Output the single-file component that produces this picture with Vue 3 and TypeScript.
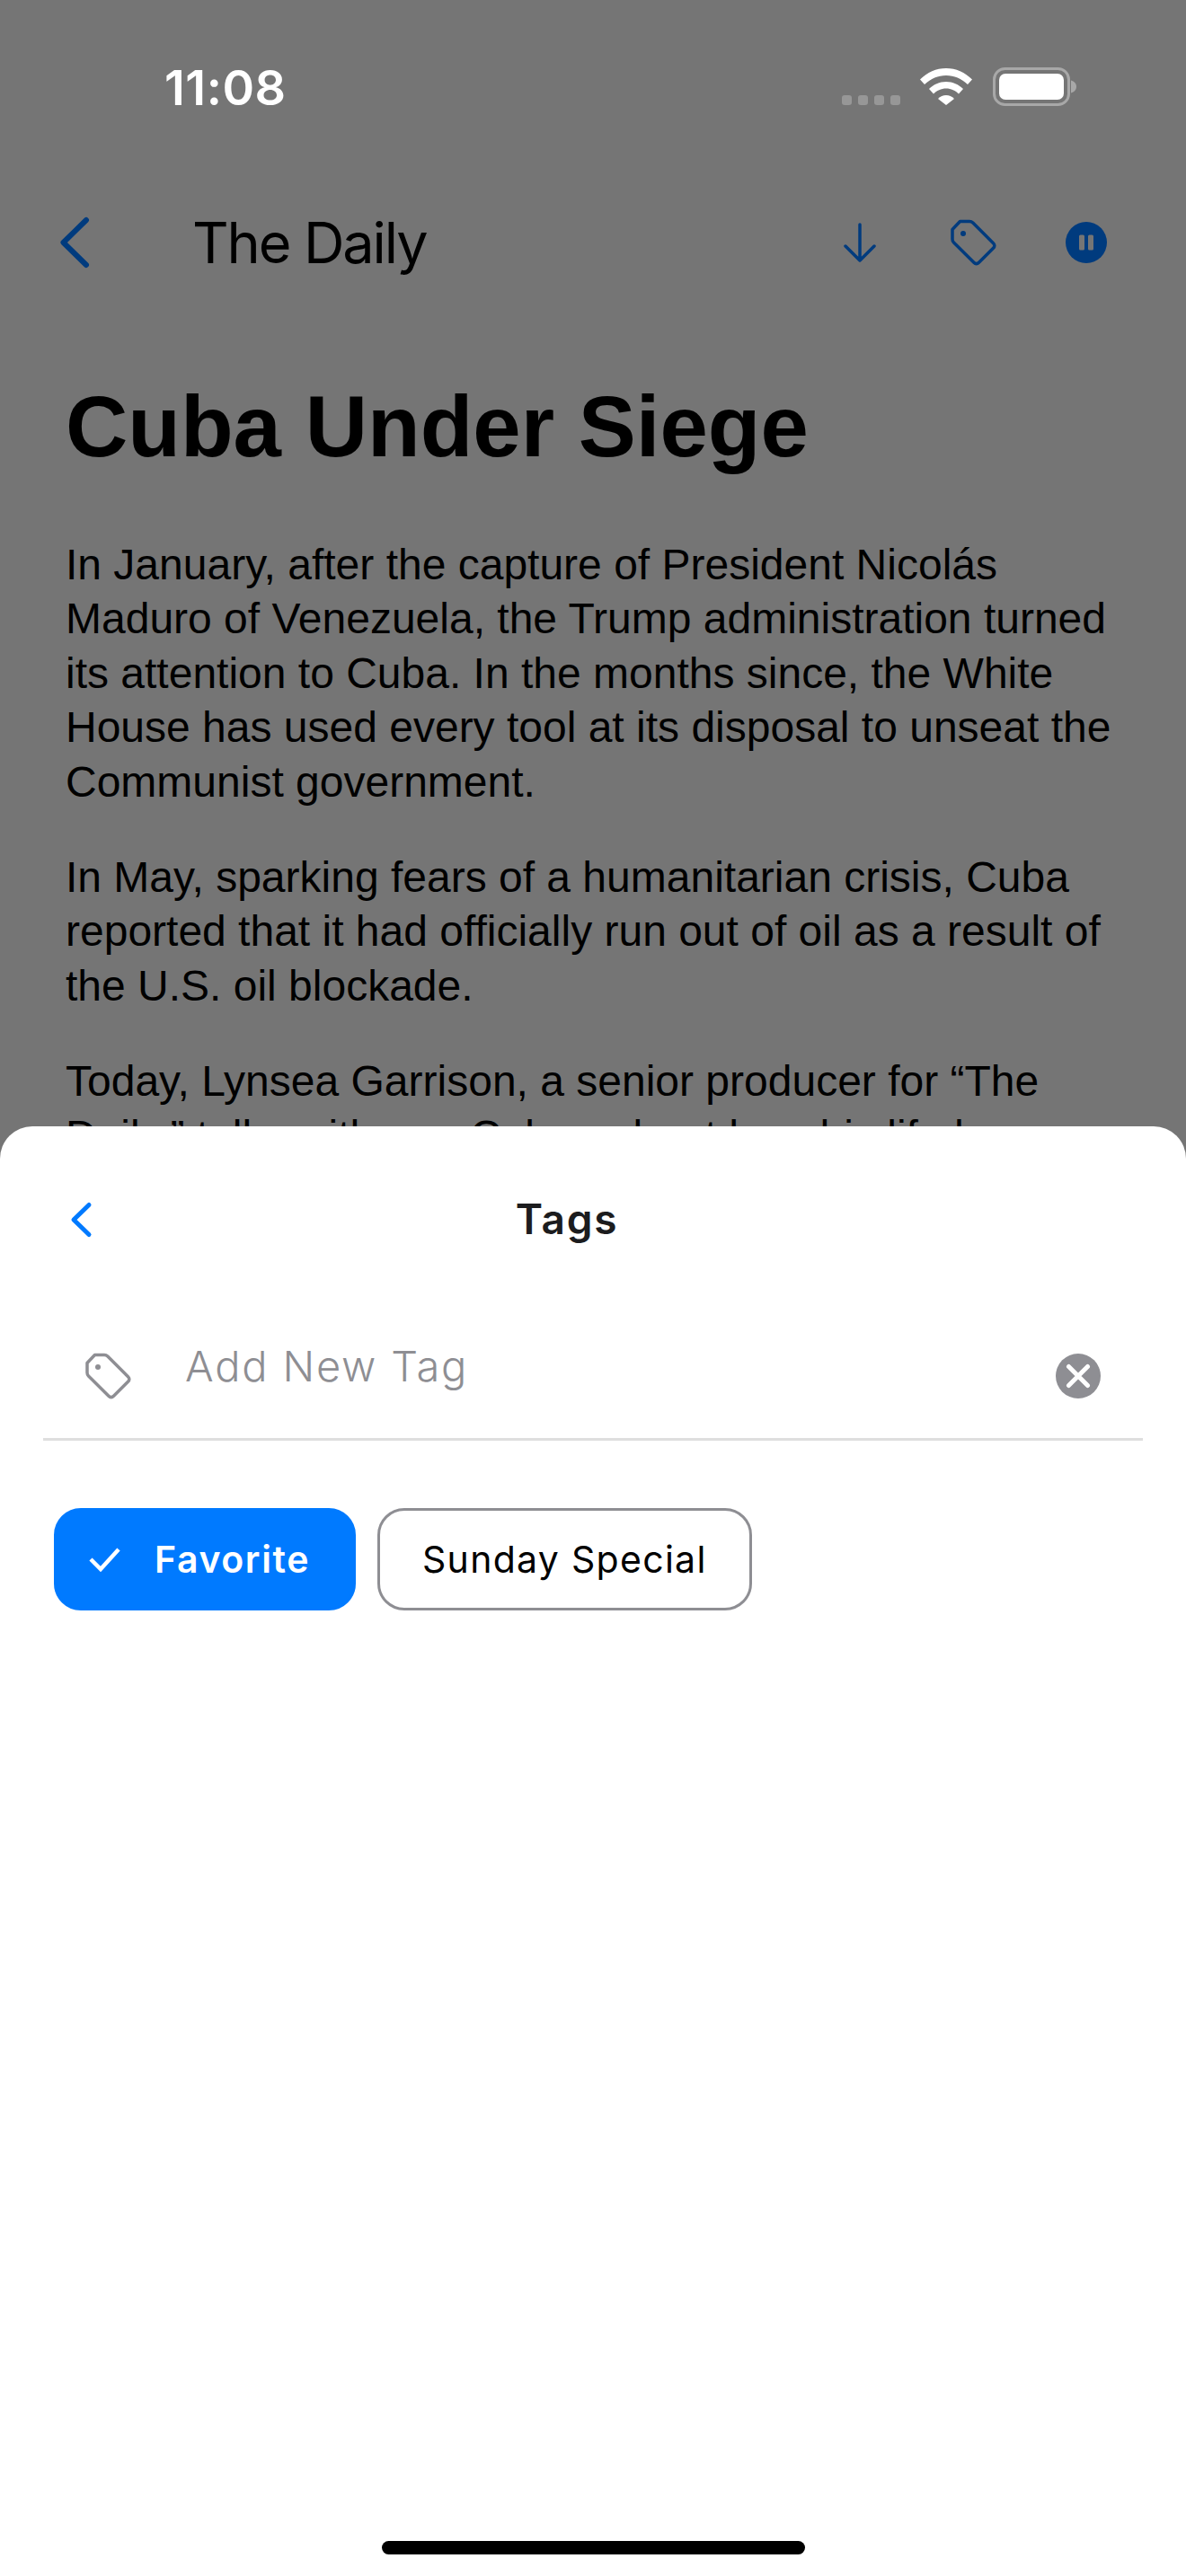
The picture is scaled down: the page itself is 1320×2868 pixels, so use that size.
<script setup lang="ts">
// article copy, one entry per rendered line
const paragraphs: string[][] = [
  [
    'In January, after the capture of President Nicolás',
    'Maduro of Venezuela, the Trump administration turned',
    'its attention to Cuba. In the months since, the White',
    'House has used every tool at its disposal to unseat the',
    'Communist government.',
  ],
  [
    'In May, sparking fears of a humanitarian crisis, Cuba',
    'reported that it had officially run out of oil as a result of',
    'the U.S. oil blockade.',
  ],
  [
    'Today, Lynsea Garrison, a senior producer for “The',
    'Daily,” talks with one Cuban about how his life has',
  ],
]
</script>

<template>
  <div class="screen">
    <div class="status">
      <span class="clock">11:08</span>
      <div class="status-icons">
        <div class="signal"><i></i><i></i><i></i><i></i></div>
        <svg class="wifi" width="58" height="42" viewBox="0 0 58 42">
          <path d="M0 13.500C8 5.500 18 1 29 1s21 4.500 29 12.500l-5 5.500C46 12.500 38 9 29 9s-17 3.500-24 10z" fill="#fff" />
          <path d="M10 24c5-5 11.500-8 19-8s14 3 19 8l-5 5.500c-3.500-3.500-8.500-6-14-6s-10.500 2.500-14 6z" fill="#fff" />
          <path d="M20 35c2.500-2.500 5.500-4 9-4s6.500 1.500 9 4L29 42z" fill="#fff" />
        </svg>
        <svg class="battery" width="94" height="44" viewBox="0 0 94 44">
          <rect x="2.500" y="1.500" width="83" height="40" rx="12" fill="none" stroke="#a8a8a8" stroke-width="3" />
          <rect x="8" y="7" width="72" height="29" rx="7" fill="#fff" />
          <path d="M88 14.500c3.500.8 6 3.500 6 7s-2.500 6.200-6 7z" fill="#a8a8a8" />
        </svg>
      </div>
    </div>

    <header class="nav">
      <svg class="nav-back" width="36" height="58" viewBox="0 0 36 58">
        <path d="M30 4 4.500 29 30 54" fill="none" stroke="#003b7e" stroke-width="6" stroke-linecap="round" stroke-linejoin="round" />
      </svg>
      <span class="nav-title">The Daily</span>
      <div class="nav-actions">
        <svg width="36" height="44" viewBox="0 0 36 44">
          <path d="M18 2v40M2 26l16 16 16-16" fill="none" stroke="#003b7e" stroke-width="3.500" stroke-linecap="round" stroke-linejoin="round" />
        </svg>
        <svg class="nav-tag" width="52" height="52" viewBox="0 0 52 52">
          <path d="M3 11.500 11.500 2.500h10.500c1.500 0 2.800.5 3.800 1.500l22.700 22.700c1.800 1.800 1.800 3.800 0 5.600L32.500 48.300c-1.800 1.800-3.800 1.800-5.600 0L4.500 26C3.500 25 3 23.700 3 22.200z" fill="none" stroke="#003b7e" stroke-width="3.500" stroke-linejoin="round" />
          <circle cx="15" cy="16" r="3" fill="#003b7e" />
        </svg>
        <svg width="46" height="46" viewBox="0 0 46 46">
          <circle cx="23" cy="23" r="23" fill="#003b7e" />
          <rect x="15" y="14.500" width="6" height="17" rx="1.500" fill="#757575" />
          <rect x="25" y="14.500" width="6" height="17" rx="1.500" fill="#757575" />
        </svg>
      </div>
    </header>

    <article class="article">
      <h1>Cuba Under Siege</h1>
      <p v-for="(lines, i) in paragraphs" :key="i">
        <span v-for="line in lines" :key="line" class="line">{{ line }}</span>
      </p>
    </article>

    <section class="sheet">
      <div class="sheet-head">
        <svg class="sheet-back" width="26" height="44" viewBox="0 0 26 44">
          <path d="M21 5.500 4 22l17 16.500" fill="none" stroke="#007aff" stroke-width="5" stroke-linecap="round" stroke-linejoin="round" />
        </svg>
        <h2>Tags</h2>
      </div>

      <div class="tag-input">
        <svg width="52" height="52" viewBox="0 0 52 52">
          <path d="M3 11.500 11.500 2.500h10.500c1.500 0 2.800.5 3.800 1.500l22.700 22.700c1.800 1.800 1.800 3.800 0 5.600L32.500 48.300c-1.800 1.800-3.800 1.800-5.600 0L4.500 26C3.500 25 3 23.700 3 22.200z" fill="none" stroke="#8e8e93" stroke-width="3.500" stroke-linejoin="round" />
          <circle cx="15" cy="16" r="3" fill="#8e8e93" />
        </svg>
        <span class="placeholder">Add New Tag</span>
        <svg class="clear" width="50" height="50" viewBox="0 0 50 50">
          <circle cx="25" cy="25" r="25" fill="#8e8e93" />
          <path d="M14.500 14.500l21 21M35.500 14.500l-21 21" stroke="#fff" stroke-width="5" stroke-linecap="round" />
        </svg>
      </div>

      <div class="tags">
        <button class="tag tag-on">
          <svg width="36" height="28" viewBox="0 0 36 28">
            <path d="M2 14l11 11L33 3" fill="none" stroke="#fff" stroke-width="4.500" />
          </svg>
          Favorite
        </button>
        <button class="tag">Sunday Special</button>
      </div>

      <div class="home-bar"></div>
    </section>
  </div>
</template>

<style scoped>
.screen {
  position: relative;
  width: 1320px;
  height: 2868px;
  overflow: hidden;
  background: #757575;
  font-family: Inter, sans-serif;
}

.status {
  display: flex;
  justify-content: space-between;
  align-items: center;
  height: 44px;
  padding: 75px 0 0 183px;
  margin-right: 122px;
}

.clock {
  color: #fff;
  font-size: 54px;
  font-weight: 600;
  letter-spacing: 0.500px;
}

.status-icons {
  display: flex;
  align-items: flex-end;
  gap: 22px;
}

.signal {
  display: flex;
  gap: 7px;
  margin-bottom: 2px;
}

.signal i {
  width: 11px;
  height: 11px;
  border-radius: 3px;
  background: #979797;
}

.wifi {
  margin-bottom: 2px;
}

.nav {
  display: flex;
  align-items: center;
  height: 70px;
  margin-top: 116px;
  padding: 0 88px 0 66px;
}

.nav-title {
  margin-left: 112px;
  font-size: 63px;
  letter-spacing: -2.100px;
  color: #000;
}

.nav-actions {
  display: flex;
  align-items: center;
  margin-left: auto;
}

.nav-tag {
  margin: 0 77px 0 82px;
}

.article {
  padding: 0 40px 0 73px;
  font-family: "Liberation Sans", Arial, sans-serif;
  color: #000;
}

h1 {
  margin: 115px 0 69px;
  font-size: 96px;
  line-height: 110px;
  font-weight: 700;
}

.article p {
  margin: 0 0 46px;
  font-size: 48px;
  line-height: 60.400px;
  white-space: nowrap;
}

.line {
  display: block;
}

.sheet {
  position: absolute;
  left: 0;
  right: 0;
  top: 1254px;
  bottom: 0;
  display: flex;
  flex-direction: column;
  background: #fff;
  border-radius: 36px 36px 0 0;
}

.sheet-head {
  position: relative;
  display: flex;
  justify-content: center;
  align-items: center;
  height: 44px;
  margin-top: 82px;
}

.sheet-back {
  position: absolute;
  left: 78px;
  top: 0;
}

h2 {
  margin: -2px 0 0 -58px;
  font-size: 46px;
  font-weight: 600;
  letter-spacing: 1.800px;
  color: #1c1c1e;
}

.tag-input {
  display: flex;
  align-items: center;
  height: 138px;
  margin: 83px 48px 0;
  padding: 0 47px 0 46px;
  border-bottom: 3px solid #dedede;
}

.placeholder {
  margin: 0 0 23px 60px;
  font-size: 47px;
  font-weight: 300;
  letter-spacing: 1.800px;
  color: #8e8e93;
}

.clear {
  margin-left: auto;
}

.tags {
  display: flex;
  gap: 24px;
  margin: 75px 0 0 60px;
}

.tag {
  display: flex;
  align-items: center;
  gap: 37px;
  height: 114px;
  padding: 0 47px;
  border: 3px solid #8e8e93;
  border-radius: 30px;
  background: #fff;
  color: #000;
  font-family: inherit;
  font-size: 41px;
  font-weight: 400;
  letter-spacing: 1.300px;
}

.tag-on {
  padding: 0 48px 0 36px;
  border-color: #007aff;
  background: #007aff;
  color: #fff;
  font-weight: 600;
  letter-spacing: 1.600px;
}

.home-bar {
  width: 471px;
  height: 15px;
  margin: auto auto 24px;
  border-radius: 8px;
  background: #000;
}
</style>
